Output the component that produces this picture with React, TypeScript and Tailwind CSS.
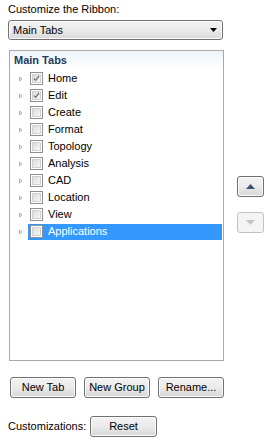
import React from "react";

const items = [
  { name: "Home", checked: true },
  { name: "Edit", checked: true },
  { name: "Create", checked: false },
  { name: "Format", checked: false },
  { name: "Topology", checked: false },
  { name: "Analysis", checked: false },
  { name: "CAD", checked: false },
  { name: "Location", checked: false },
  { name: "View", checked: false },
  { name: "Applications", checked: false, selected: true },
];

function Expander() {
  return (
    <svg width="6" height="8" viewBox="0 0 6 8" className="block">
      <polygon points="1.5,2 4,4 1.5,6" fill="#ffffff" stroke="#b0b0b0" strokeWidth="1" />
    </svg>
  );
}

function Check({ checked }: { checked: boolean }) {
  return (
    <div className="w-[13px] h-[13px] border border-[#8f8f8f] bg-white p-px">
      <div className="w-full h-full bg-gradient-to-br from-[#dcdcdc] to-[#f7f7f7] border border-[#d0d0d0] flex items-center justify-center">
        {checked && (
          <svg width="9" height="9" viewBox="0 0 9 9" className="block">
            <path d="M1.2 4.6 L3.4 6.9 L7.8 1.2" fill="none" stroke="#6a6a6a" strokeWidth="1.6" />
          </svg>
        )}
      </div>
    </div>
  );
}

function Btn({ children, w }: { children: React.ReactNode; w: string }) {
  return (
    <div
      className={`${w} h-[21px] rounded-[3px] border border-[#707070] bg-gradient-to-b from-[#f2f2f2] via-[#ebebeb] to-[#d6d6d6] flex items-center justify-center text-[11px] text-black shadow-[inset_0_0_0_1px_#fcfcfc]`}
    >
      {children}
    </div>
  );
}

export default function App() {
  return (
    <div
      className="w-[268px] h-[441px] bg-white text-black flex flex-col"
      style={{ fontFamily: '"Liberation Sans", Arial, sans-serif' }}
    >
      <div className="ml-[8px] mt-[3px] h-[13px] leading-[13px] text-[11px]">Customize the Ribbon:</div>
      <div className="ml-[8px] mt-[4px] w-[215px] h-[20px] rounded-[3px] border border-[#707070] bg-gradient-to-b from-[#f2f2f2] via-[#ebebeb] to-[#d8d8d8] shadow-[inset_0_0_0_1px_#fcfcfc] flex items-center pl-[4px] pr-[5px] text-[11px]">
        <span className="flex-1">Main Tabs</span>
        <svg width="7" height="4" viewBox="0 0 7 4" className="block">
          <polygon points="0,0 7,0 3.5,4" fill="#000000" />
        </svg>
      </div>
      <div className="flex mt-[10px]">
        <div className="ml-[9px] w-[215px] h-[311px] border border-[#a9a9a9] bg-white flex flex-col">
          <div className="h-[19px] flex items-center pl-[4px] text-[11px] font-bold text-[#1e395b] bg-gradient-to-b from-[#eef3fa] to-[#ffffff]">
            Main Tabs
          </div>
          {items.map((it) => (
            <div key={it.name} className="h-[17px] flex items-center">
              <div className="w-[18px] flex justify-end pr-[4px]">
                <Expander />
              </div>
              <div
                className={`flex-1 h-[16px] flex items-center pl-[2px] mr-[1px] ${
                  it.selected ? "bg-[#3399ff] text-white" : ""
                }`}
              >
                <Check checked={it.checked} />
                <span className="ml-[5px] text-[11px] leading-none">{it.name}</span>
              </div>
            </div>
          ))}
        </div>
        <div className="ml-[13px] flex flex-col justify-center gap-[15px] pb-[2px]">
          <div className="w-[27px] h-[21px] rounded-[3px] border border-[#707070] bg-gradient-to-b from-[#f2f2f2] via-[#ebebeb] to-[#d6d6d6] shadow-[inset_0_0_0_1px_#fcfcfc] flex items-center justify-center">
            <svg width="9" height="5" viewBox="0 0 9 5" className="block">
              <polygon points="4.5,0 9,5 0,5" fill="#3c5276" />
            </svg>
          </div>
          <div className="w-[27px] h-[21px] rounded-[3px] border border-[#c2c2c2] bg-[#f4f4f4] flex items-center justify-center">
            <svg width="9" height="5" viewBox="0 0 9 5" className="block">
              <polygon points="0,0 9,0 4.5,5" fill="#c4c4c4" />
            </svg>
          </div>
        </div>
      </div>
      <div className="flex mt-[16px] ml-[10px] gap-[8px]">
        <Btn w="w-[66px]">New Tab</Btn>
        <Btn w="w-[66px]">New Group</Btn>
        <Btn w="w-[66px]">Rename...</Btn>
      </div>
      <div className="flex items-center mt-[18px] ml-[8px]">
        <span className="text-[11px] w-[82px]">Customizations:</span>
        <Btn w="w-[67px]">Reset</Btn>
      </div>
    </div>
  );
}
